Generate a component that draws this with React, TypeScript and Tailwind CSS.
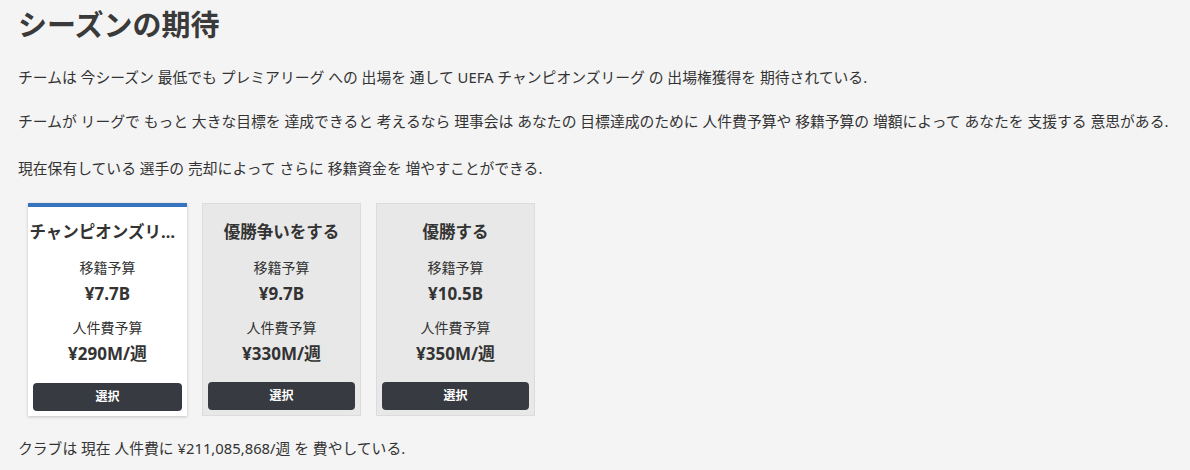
import React from "react";

const plans = [
  { title: "チャンピオンズリーグ出場", transfer: "¥7.7B", wage: "¥290M/週", selected: true },
  { title: "優勝争いをする", transfer: "¥9.7B", wage: "¥330M/週", selected: false },
  { title: "優勝する", transfer: "¥10.5B", wage: "¥350M/週", selected: false },
];

const App: React.FC = () => {
  return (
    <div
      className="min-h-[470px] bg-[#f4f4f4] text-[#333] px-[18px] pt-[4px]"
      style={{ fontFamily: '"Noto Sans", "Noto Sans CJK JP", sans-serif' }}
    >
      <h1 className="text-[29px] font-bold leading-[42px] text-[#3a3a3a]">シーズンの期待</h1>

      <p className="mt-[20px] text-[14.8px] leading-[22px] whitespace-nowrap">
        チームは 今シーズン 最低でも プレミアリーグ への 出場を 通して UEFA チャンピオンズリーグ の 出場権獲得を 期待されている.
      </p>
      <p className="mt-[22px] text-[14.8px] leading-[22px] whitespace-nowrap">
        チームが リーグで もっと 大きな目標を 達成できると 考えるなら 理事会は あなたの 目標達成のために 人件費予算や 移籍予算の 増額によって あなたを 支援する 意思がある.
      </p>
      <p className="mt-[25px] text-[14.8px] leading-[22px] whitespace-nowrap">
        現在保有している 選手の 売却によって さらに 移籍資金を 増やすことができる.
      </p>

      <div className="mt-[24px] ml-[10px] flex gap-[15px]">
        {plans.map((p) => (
          <div
            key={p.title}
            className={`w-[159px] h-[213px] flex flex-col items-center px-[5px] pb-[5px] ${
              p.selected
                ? "bg-white border-t-[4px] border-[#3873bf] shadow-[0_1px_3px_rgba(0,0,0,0.2)]"
                : "bg-[#e8e8e8] border border-[#dcdcdc]"
            }`}
          >
            <div
              className={`w-[156px] text-center text-[16.5px] font-bold leading-[24px] truncate ${
                p.selected ? "mt-[13px]" : "mt-[16px]"
              }`}
            >
              {p.title}
            </div>
            <div className="mt-[15px] text-[14px] leading-[18px]">移籍予算</div>
            <div className="mt-[6px] text-[17px] font-bold leading-[22px]">{p.transfer}</div>
            <div className="mt-[14px] text-[14px] leading-[18px]">人件費予算</div>
            <div className="mt-[6px] text-[17px] font-bold leading-[22px]">{p.wage}</div>
            <button className="mt-auto w-full h-[28px] rounded-[4px] bg-[#373a41] text-white text-[12px] font-bold">
              選択
            </button>
          </div>
        ))}
      </div>

      <p className="mt-[21px] text-[14.8px] leading-[22px] whitespace-nowrap">
        クラブは 現在 人件費に ¥211,085,868/週 を 費やしている.
      </p>
    </div>
  );
};

export default App;
